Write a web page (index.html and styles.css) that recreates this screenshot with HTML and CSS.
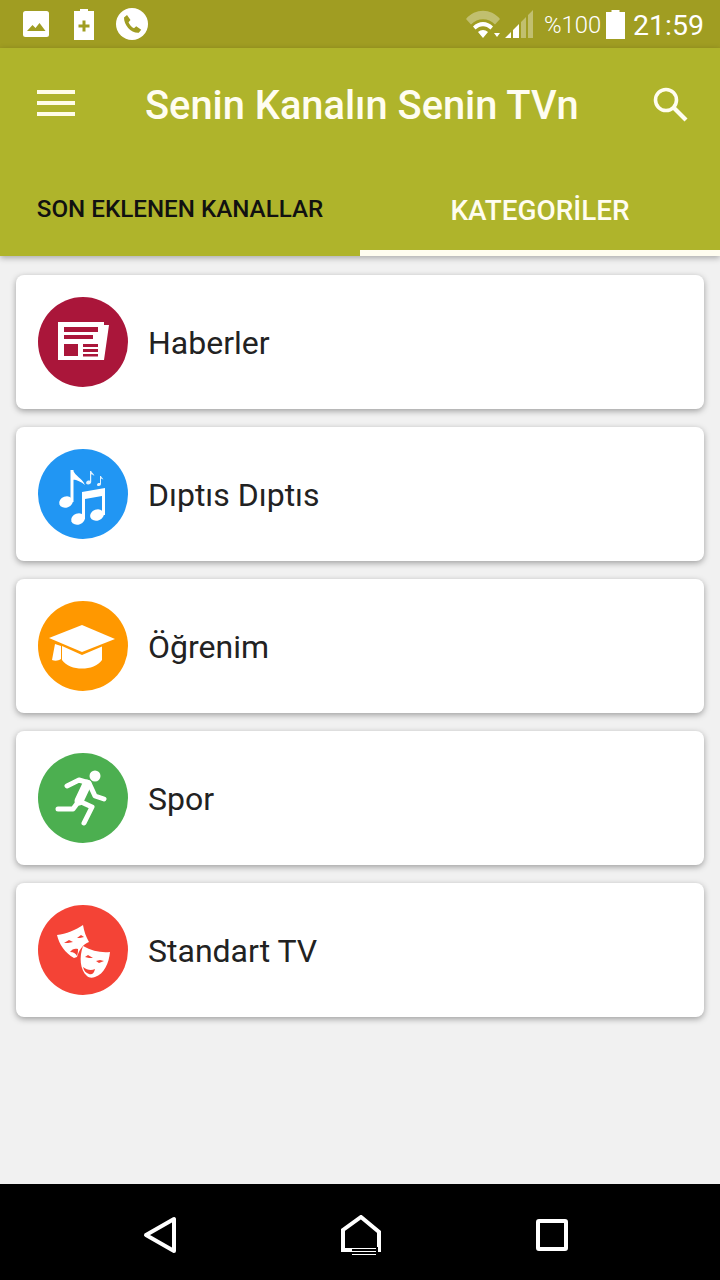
FILE: index.html
```html
<!DOCTYPE html>
<html>
<head>
    <meta charset="utf-8">
    <title>Senin Kanalın Senin TVn</title>
    <link rel="stylesheet" href="styles.css">
</head>
<body>

<div class="status-bar">
    <div class="status-left">
        <svg class="ic-image" viewBox="0 0 26 26"><rect width="26" height="26" rx="2.500" fill="#fff"/><path d="M4 20l5.500-6 3 3 4-5 6 8z" fill="#a09d22"/></svg>
        <svg class="ic-charge" viewBox="0 0 20 31"><path d="M6 0h8v2h6v29H0V2h6z" fill="#fff"/><path d="M8.500 11.500h3v4h4v3h-4v4h-3v-4h-4v-3h4z" fill="#a09d22"/></svg>
        <svg class="ic-phone" viewBox="0 0 32 32"><circle cx="16" cy="16" r="16" fill="#fff"/><path d="M8 9.500l3-2.500 3.500 5-2 2.200c1 2.600 3 4.800 5.500 6l2.200-2 5 3.600-2.400 3c-7.600.6-15-7.800-14.800-15.300z" fill="#a09d22"/></svg>
    </div>
    <div class="status-right">
        <svg class="ic-wifi" viewBox="0 0 34 29"><path d="M0 9C9-2 25-2 34 9l-5 5.500c-6.500-7-17.500-7-24 0z" fill="#fff" fill-opacity=".35"/><path d="M7 16.500c5.500-6 14.500-6 20 0l-2.500 3c-4.500-4.500-10.500-4.500-15 0zM12 22c3-2.800 7-2.800 10 0l-5 6z" fill="#fff"/><path d="M28 23h6l-3 4z" fill="#fff"/></svg>
        <svg class="ic-signal" viewBox="0 0 28 28"><path d="M16 28V12l5-5v21zM23 28V5l5-5v28z" fill="#fff" fill-opacity=".35"/><path d="M0 28l6-6v6zM8 28v-8l6-6v14z" fill="#fff"/></svg>
        <span class="battery-text">%100</span>
        <svg class="ic-battery" viewBox="0 0 19 29"><path d="M5.500 0h8v2H19v27H0V2h5.500z" fill="#fff"/></svg>
        <span class="clock">21:59</span>
    </div>
</div>

<div class="toolbar">
    <div class="toolbar-top">
        <div class="menu-icon"><span></span><span></span><span></span></div>
        <h1 class="title">Senin Kanalın Senin TVn</h1>
        <svg class="ic-search" viewBox="0 0 36 36"><circle cx="14" cy="14" r="10.500" fill="none" stroke="#fffdf0" stroke-width="3.600"/><path d="M21.500 21.500L34 34" stroke="#fffdf0" stroke-width="4.200" fill="none"/></svg>
    </div>
    <div class="tabs">
        <div class="tab">SON EKLENEN KANALLAR</div>
        <div class="tab tab-active">KATEGORİLER</div>
    </div>
</div>

<div class="content">
    <div class="card">
        <div class="circle circle-red">
            <svg viewBox="0 0 90 90"><path d="M20 25h46v3h5l-5 35H20z" fill="#fff"/><path d="M26 30h34v5H26zM26 38h29v4H26zM26 47h14v12H26zM45 47h15v3H45zM45 52h15v3H45zM45 57h15v2.500H45z" fill="#aa163a"/></svg>
        </div>
        <span class="card-label">Haberler</span>
    </div>
    <div class="card">
        <div class="circle circle-blue">
            <svg viewBox="0 0 90 90">
                <g fill="#fff">
                    <ellipse cx="28" cy="53" rx="7" ry="5.500" transform="rotate(-20 28 53)"/>
                    <path d="M32.500 21h3v32h-3zM35 21c2 6 9 8 12 15-4-3.500-8-5-12-5.500z"/>
                    <ellipse cx="40" cy="70" rx="7" ry="5.500" transform="rotate(-20 40 70)"/>
                    <ellipse cx="59" cy="66" rx="7" ry="5.500" transform="rotate(-20 59 66)"/>
                    <path d="M44 43l23-4v27h-3V47l-17 3v20h-3z"/>
                </g>
                <g fill="#e3f2fd">
                    <path d="M52 22h1.200v11c0 1.500-1.500 2.500-3 2.500-1.800 0-2.400-1.200-2-2.300.5-1.200 2.200-2 3.800-1.400zM53.200 22c.4 1.800 2.800 2.600 3.200 5-1-1-2.200-1.600-3.200-1.800z"/>
                    <path d="M62 27h1v8c0 1.200-1 2-2.300 2-1.300 0-2-.9-1.600-1.800.4-1 1.700-1.500 2.900-1.100zM63 27c.3 1.300 2 2 2.400 3.800-.8-.7-1.600-1.100-2.400-1.300z"/>
                </g>
            </svg>
        </div>
        <span class="card-label">Dıptıs Dıptıs</span>
    </div>
    <div class="card">
        <div class="circle circle-orange">
            <svg viewBox="0 0 90 90"><g fill="#fff"><path d="M44 24l33 14-33 13-33-14z"/><path d="M24 45l20 9 20-8.500V59c-4 6-12 8.500-20 8.500S28 65 24 59z"/><path d="M17 43l6 2v13c-3 2-6 2-9 1z"/></g></svg>
        </div>
        <span class="card-label">Öğrenim</span>
    </div>
    <div class="card">
        <div class="circle circle-green">
            <svg viewBox="0 0 90 90">
                <circle cx="57" cy="23" r="5.500" fill="#fff"/>
                <path d="M29 33l12-6 10 3 6 13 9 3M41 48l-6 8H20M41 48l13 6-8 16" fill="none" stroke="#fff" stroke-width="5" stroke-linecap="round" stroke-linejoin="round"/>
                <path d="M49 31l-8 17" fill="none" stroke="#fff" stroke-width="9" stroke-linecap="round"/>
            </svg>
        </div>
        <span class="card-label">Spor</span>
    </div>
    <div class="card">
        <div class="circle circle-tomato">
            <svg viewBox="0 0 90 90">
                <path d="M19 30c9-1 19-5 26-10 1 6 3 12 6 17-6 2-10 8-12 15l-3 1c-9-5-15-14-17-23z" fill="#fff"/>
                <path d="M45 41c9 5 18 7 27 6-1 11-6 22-15 25-3 1-6 1-8-1-7-6-8-19-4-30z" fill="#fff"/>
                <path d="M26 38l5-3 4 2-5 1zM39 33l4-3 3 2-4 1zM32 47c2-3 5-4 8-3 0 2 0 4-1 7-1-2-3-4-7-4z" fill="#f44336"/>
                <path d="M47 52l3-2 5 3-4 0zM58 56l4-1 4 1-5 2zM45 62c4 3 8 4 12 2-1 5-4 6-6 5-3-1-5-3-6-7z" fill="#f44336"/>
            </svg>
        </div>
        <span class="card-label">Standart TV</span>
    </div>
</div>

<div class="nav-bar">
    <svg class="ic-back" viewBox="0 0 34 38"><path d="M3 19L31 3v32z" fill="none" stroke="#fff" stroke-width="4" stroke-linejoin="round"/></svg>
    <svg class="ic-home" viewBox="0 0 40 40"><path d="M2 35V15L20 2l18 15v18z" fill="none" stroke="#fff" stroke-width="4"/><path d="M11 32h26v8H11z" fill="#000"/><path d="M11 33.500h24M11 36.500h24M11 39.500h24" stroke="#fff" stroke-width="1"/></svg>
    <svg class="ic-recent" viewBox="0 0 32 32"><rect x="2" y="2" width="28" height="28" rx="1" fill="none" stroke="#fff" stroke-width="4"/></svg>
</div>

</body>
</html>
```

FILE: styles.css
```css
body {
    margin: 0;
    width: 720px;
    height: 1280px;
    display: flex;
    flex-direction: column;
    overflow: hidden;
    background-color: #f1f1f1;
    font-family: Roboto, sans-serif;
    color: #222;
}

svg {
    display: block;
    flex: none;
}

.status-bar {
    height: 48px;
    flex: none;
    display: flex;
    justify-content: space-between;
    align-items: center;
    background-color: #a09d22;
    color: #fff;
}

.status-left {
    display: flex;
    align-items: center;
    padding-left: 23px;
}

.ic-image { width: 26px; height: 26px; margin-right: 25px; }
.ic-charge { width: 20px; height: 31px; margin-right: 22px; }
.ic-phone { width: 32px; height: 32px; }

.status-right {
    display: flex;
    align-items: center;
    padding-right: 16px;
}

.ic-wifi { width: 34px; height: 29px; margin-right: 5px; }
.ic-signal { width: 28px; height: 28px; margin-right: 11px; }
.ic-battery { width: 19px; height: 29px; margin-right: 8px; }

.battery-text {
    font-size: 23.8px;
    font-weight: 300;
    width: 62px;
    padding-top: 2px;
}

.clock {
    font-size: 28.5px;
    padding-top: 2px;
}

.toolbar {
    height: 208px;
    flex: none;
    display: flex;
    flex-direction: column;
    background-color: #afb42b;
    box-shadow: 0 2px 6px rgba(0, 0, 0, 0.3);
    position: relative;
}

.toolbar-top {
    height: 112px;
    flex: none;
    display: flex;
    align-items: center;
    padding: 0 32px 4px 37px;
}

.menu-icon {
    width: 38px;
    display: flex;
    flex-direction: column;
    gap: 7px;
    margin-right: 70px;
    margin-bottom: 2px;
}

.menu-icon span {
    height: 4px;
    background-color: #fffde7;
}

.title {
    flex: 1;
    margin: 0;
    padding-top: 2px;
    font-size: 39.8px;
    font-weight: 500;
    color: #fffdf0;
}

.ic-search { width: 36px; height: 36px; }

.tabs {
    flex: 1;
    display: flex;
}

.tab {
    width: 360px;
    box-sizing: border-box;
    padding-top: 31px;
    text-align: center;
    font-size: 24.2px;
    font-weight: 500;
    color: #111;
}

.tab-active {
    color: #fffdf0;
    font-size: 27.9px;
    padding-top: 30px;
    border-bottom: 6px solid #fffdf0;
}

.content {
    flex: 1;
    display: flex;
    flex-direction: column;
    gap: 18px;
    padding: 19px 16px 0;
}

.card {
    height: 134px;
    box-sizing: border-box;
    display: flex;
    align-items: center;
    padding-left: 22px;
    background-color: #fff;
    border-radius: 8px;
    box-shadow: 0 2px 6px rgba(0, 0, 0, 0.35);
}

.circle {
    width: 90px;
    height: 90px;
    border-radius: 50%;
    margin-right: 20px;
}

.circle-red { background-color: #aa163a; }
.circle-blue { background-color: #2196f3; }
.circle-orange { background-color: #ff9800; }
.circle-green { background-color: #4caf50; }
.circle-tomato { background-color: #f44336; }

.card-label {
    font-size: 32px;
    padding-top: 2px;
}

.nav-bar {
    height: 96px;
    box-sizing: border-box;
    flex: none;
    display: flex;
    align-items: center;
    background-color: #000;
    padding: 6px 0 0 143px;
}

.ic-back { width: 34px; height: 38px; margin-right: 164px; }
.ic-home { width: 40px; height: 40px; margin-right: 155px; }
.ic-recent { width: 32px; height: 32px; }
```
